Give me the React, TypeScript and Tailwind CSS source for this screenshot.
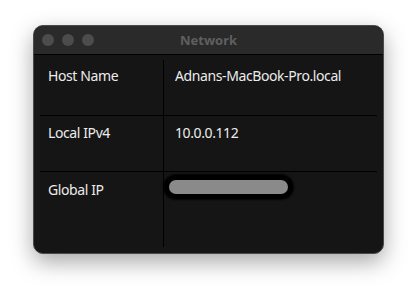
const rows = [
  { label: 'Host Name', value: 'Adnans-MacBook-Pro.local', pt: 'pt-[6px]' },
  { label: 'Local IPv4', value: '10.0.0.112', pt: 'pt-[7px]' },
]

export default function App() {
  return (
    <div className="w-[418px] h-[296px] bg-white pt-[25px] pl-[33px] font-['Noto_Sans','Open_Sans',sans-serif]">
      <div className="w-[351px] h-[229px] rounded-[10px] overflow-hidden border border-[#4a4a4a] bg-[#151515] shadow-[0_8px_22px_rgba(0,0,0,0.35)] flex flex-col">
        <div className="h-[29px] shrink-0 bg-[#2a2a2a] border-b border-black flex items-center pl-[8px] gap-[8px]">
          <span className="w-[12px] h-[12px] rounded-full bg-[#4b4c4b]" />
          <span className="w-[12px] h-[12px] rounded-full bg-[#4b4c4b]" />
          <span className="w-[12px] h-[12px] rounded-full bg-[#4b4c4b]" />
          <span className="flex-1 text-center pr-[68px] text-[13px] font-bold text-[#5f5f5f] leading-none">Network</span>
        </div>
        <div className="px-[6px] pt-[5px] text-[14px] tracking-[-0.4px] leading-[20px] text-[#ececec]">
          {rows.map((r) => (
            <div key={r.label} className="flex h-[56px] border-b border-black">
              <div className={`w-[124px] shrink-0 border-r border-black pl-[8px] ${r.pt}`}>{r.label}</div>
              <div className={`flex-1 pl-[11px] ${r.pt}`}>{r.value}</div>
            </div>
          ))}
          <div className="flex h-[75px]">
            <div className="w-[124px] shrink-0 border-r border-black pl-[8px] pt-[8px]">Global IP</div>
            <div className="flex-1 pt-[3px]">
              <div className="w-[129px] h-[24px] rounded-full bg-black p-[5px] shadow-[0_0_2px_1px_rgba(0,0,0,0.8)]">
                <div className="w-full h-full rounded-full bg-[#8a8a8a]" />
              </div>
            </div>
          </div>
        </div>
      </div>
    </div>
  )
}
